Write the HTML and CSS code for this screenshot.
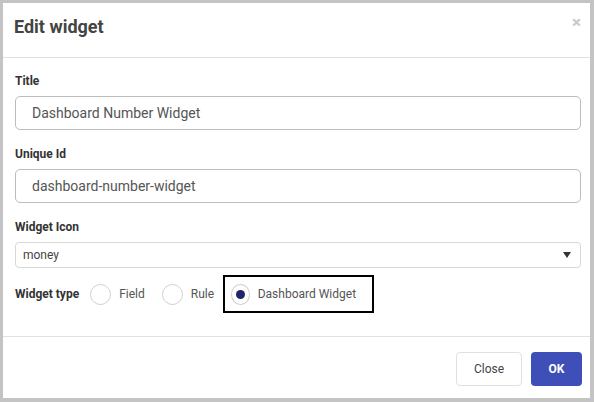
FILE: index.html
```html
<!DOCTYPE html>
<html>
<head>
<meta charset="utf-8">
<link rel="stylesheet" href="styles.css">
</head>
<body>
<div class="modal">
  <div class="header">
    <h1 class="title">Edit widget</h1>
    <span class="close-x">&times;</span>
  </div>
  <div class="body">
    <label class="lbl">Title</label>
    <div class="input">Dashboard Number Widget</div>
    <label class="lbl">Unique Id</label>
    <div class="input">dashboard-number-widget</div>
    <label class="lbl">Widget Icon</label>
    <div class="select"><span>money</span><span class="caret"></span></div>
    <div class="type-row">
      <span class="lbl inline">Widget type</span>
      <span class="opt"><span class="radio"></span>Field</span>
      <span class="opt"><span class="radio"></span>Rule</span>
      <span class="opt boxed"><span class="radio on"></span>Dashboard Widget</span>
    </div>
  </div>
  <div class="footer">
    <button class="btn btn-close">Close</button>
    <button class="btn btn-ok">OK</button>
  </div>
</div>
</body>
</html>
```
FILE: styles.css
```css
html, body { margin: 0; padding: 0; }
body {
  background: #c4c4c4;
  width: 594px;
  height: 402px;
  padding: 3px 4px 4px 3px;
  box-sizing: border-box;
  font-family: Roboto, "Liberation Sans", sans-serif;
}
.modal {
  background: #fff;
  height: 395px;
  display: flex;
  flex-direction: column;
}
.header {
  height: 54px;
  border-bottom: 1px solid #e2e2e2;
  display: flex;
  align-items: flex-start;
  justify-content: space-between;
  padding: 0 9px 0 11px;
}
.title {
  margin: 13px 0 0 0;
  font-size: 18px;
  font-weight: 700;
  color: #444;
  line-height: 22px;
}
.close-x {
  margin-top: 9px;
  font-size: 17px;
  color: #c8c8c8;
  font-weight: 700;
  line-height: 20px;
}
.body {
  padding: 16px 9px 0 12px;
  display: flex;
  flex-direction: column;
  height: 279px;
  box-sizing: border-box;
  border-bottom: 1px solid #e2e2e2;
}
.lbl {
  font-size: 12px;
  font-weight: 700;
  color: #333;
  line-height: 14px;
  display: block;
  margin-bottom: 8px;
}
.input {
  height: 34px;
  box-sizing: border-box;
  border: 1px solid #bcbcbc;
  border-radius: 5px;
  padding: 0 16px;
  font-size: 14px;
  color: #555;
  display: flex;
  align-items: center;
  margin-bottom: 17px;
}
.select {
  height: 26px;
  box-sizing: border-box;
  border: 1px solid #d8d8d8;
  border-radius: 4px;
  padding: 0 9px 0 7px;
  font-size: 12px;
  color: #444;
  display: flex;
  align-items: center;
  justify-content: space-between;
  margin-bottom: 7px;
}
.caret {
  width: 0; height: 0;
  border-left: 4px solid transparent;
  border-right: 4px solid transparent;
  border-top: 6px solid #333;
}
.type-row {
  display: flex;
  align-items: center;
  height: 38px;
  white-space: nowrap;
}
.lbl.inline { margin: 0 11px 0 0; }
.opt {
  display: flex;
  align-items: center;
  font-size: 12px;
  color: #555;
  margin-right: 17px;
  flex-shrink: 0;
}
.radio {
  width: 19px;
  height: 19px;
  border: 1px solid #cfcfcf;
  border-radius: 50%;
  margin-right: 8px;
  display: inline-flex;
  align-items: center;
  justify-content: center;
}
.radio.on::after {
  content: "";
  width: 9px;
  height: 9px;
  border-radius: 50%;
  background: #1f2566;
}
.opt.boxed {
  border: 2px solid #000;
  height: 38px;
  box-sizing: border-box;
  padding: 0 16px 0 6px;
  margin-left: -8px;
  width: 151px;
}
.footer {
  flex: 1;
  display: flex;
  justify-content: flex-end;
  align-items: flex-start;
  gap: 9px;
  padding: 15px 8px 0 0;
}
.btn {
  height: 34px;
  border-radius: 4px;
  font-family: Roboto, "Liberation Sans", sans-serif;
  font-size: 12px;
  cursor: pointer;
}
.btn-close {
  width: 66px;
  background: #fff;
  border: 1px solid #e0e0e0;
  color: #444;
}
.btn-ok {
  width: 51px;
  background: #3e50b8;
  border: none;
  color: #fff;
  font-weight: 700;
}
```
